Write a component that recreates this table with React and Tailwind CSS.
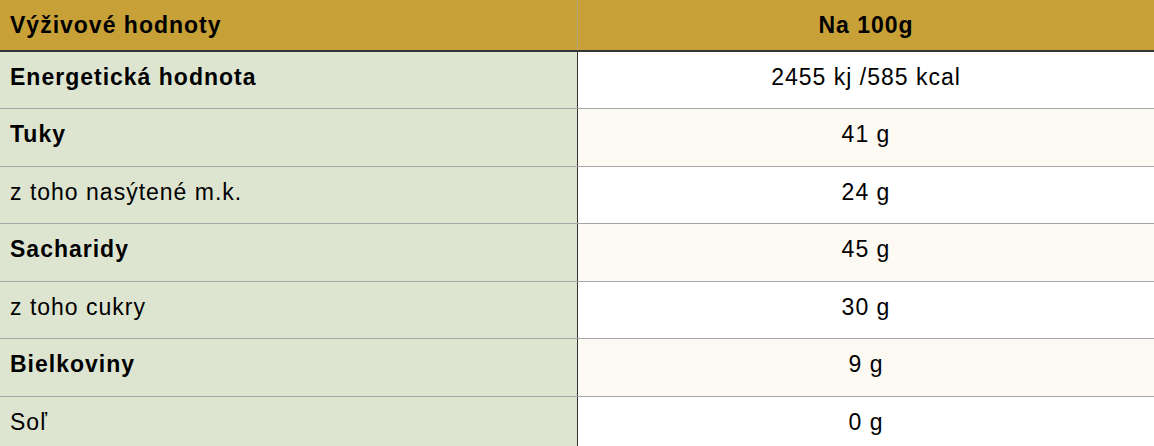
import React from "react";

const rows = [
  { label: "Energetická hodnota", value: "2455 kj /585 kcal", bold: true },
  { label: "Tuky", value: "41 g", bold: true },
  { label: "z toho nasýtené m.k.", value: "24 g", bold: false },
  { label: "Sacharidy", value: "45 g", bold: true },
  { label: "z toho cukry", value: "30 g", bold: false },
  { label: "Bielkoviny", value: "9 g", bold: true },
  { label: "Soľ", value: "0 g", bold: false },
];

const App = () => {
  return (
    <div className="w-full min-h-screen bg-white text-black text-[23px] tracking-[1px] font-['Liberation_Sans',Arial,sans-serif]">
      {/* hlavička */}
      <div className="grid grid-cols-[578px_1fr] h-[51.5px] bg-[#c7a138] border-b-2 border-[#353535] font-bold">
        <div className="flex items-center px-[10px] border-r border-[#b3a67e]">
          Výživové hodnoty
        </div>
        <div className="flex items-center justify-center">Na 100g</div>
      </div>

      {rows.map((row, i) => (
        <div
          key={row.label}
          className="grid grid-cols-[578px_1fr] h-[57.6px] border-b border-[#a5a5a5]"
        >
          <div
            className={`bg-[#dde5d0] border-r border-[#353535] px-[10px] pt-[8px] ${
              row.bold ? "font-bold" : ""
            }`}
          >
            {row.label}
          </div>
          <div
            className={`flex justify-center pt-[8px] ${
              i % 2 === 1 ? "bg-[#fdfaf3]" : "bg-white"
            }`}
          >
            {row.value}
          </div>
        </div>
      ))}
    </div>
  );
};

export default App;
